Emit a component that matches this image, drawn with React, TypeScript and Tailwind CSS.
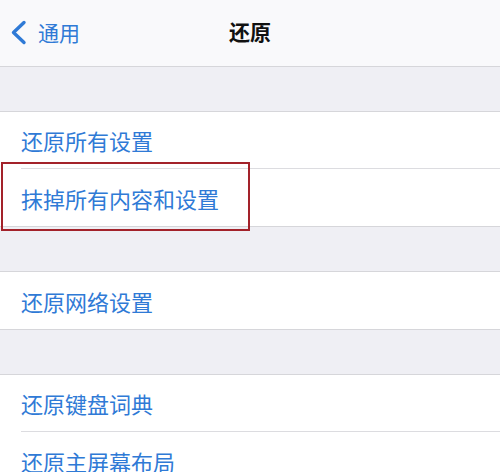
const font = {
  fontFamily: '"Noto Sans CJK SC", "Noto Sans", sans-serif',
};

type Section = { items: string[] };

const sections: Section[] = [
  { items: ["还原所有设置", "抹掉所有内容和设置"] },
  { items: ["还原网络设置"] },
  { items: ["还原键盘词典", "还原主屏幕布局"] },
];

function Row({ label, last }: { label: string; last: boolean }) {
  return (
    <div className="bg-white pl-[21px]">
      <div
        className={
          last
            ? "h-[57px] flex items-center"
            : "h-[57px] flex items-center border-b border-[#dcdce0]"
        }
      >
        <span className="text-[22px] leading-none text-[#2f7ad6]">{label}</span>
      </div>
    </div>
  );
}

export default function App() {
  return (
    <div
      className="relative w-[500px] h-[472px] overflow-hidden bg-[#efeff4]"
      style={font}
    >
      <div className="h-[67px] bg-[#f9f9fb] border-b border-[#d6d6da] flex items-center relative">
        <div className="flex items-center pl-[10px] gap-[11px] text-[#2f7ad6] -mt-[2px]">
          <svg width="17" height="25" viewBox="0 0 17 25" fill="none">
            <polyline
              points="14,2.5 3.5,12.5 14,22.5"
              stroke="#2f7ad6"
              strokeWidth="3.4"
              strokeLinecap="round"
              strokeLinejoin="round"
            />
          </svg>
          <span className="text-[21px] leading-none">通用</span>
        </div>
        <div className="absolute inset-x-0 top-0 h-full flex items-center justify-center -mt-[2px] pointer-events-none">
          <span className="text-[21px] leading-none font-bold text-[#111]">
            还原
          </span>
        </div>
      </div>

      {sections.map((s, i) => (
        <div key={i} className="pt-[44px]">
          <div className="border-y border-[#d6d6da]">
            {s.items.map((label, j) => (
              <Row key={label} label={label} last={j === s.items.length - 1} />
            ))}
          </div>
        </div>
      ))}

      <div className="absolute left-[1px] top-[162px] w-[249px] h-[69px] border-2 border-[#a3222a]" />
    </div>
  );
}
